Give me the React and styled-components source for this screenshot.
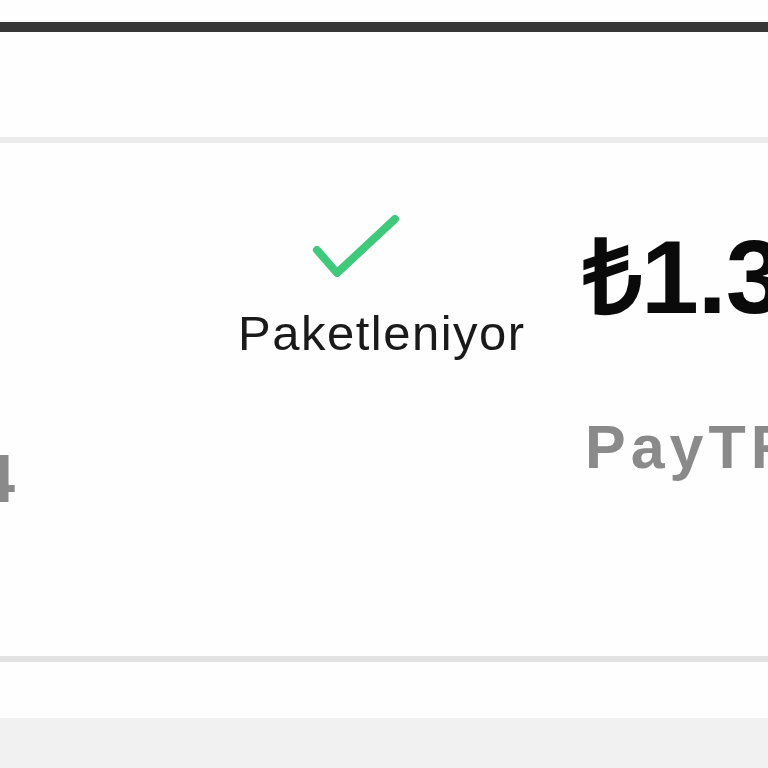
import React from "react";
import styled, { createGlobalStyle } from "styled-components";

const Global = createGlobalStyle`
  html, body { margin: 0; padding: 0; }
  body {
    width: 768px;
    height: 768px;
    overflow: hidden;
    background: #f1f1f1;
    font-family: "Liberation Sans", Arial, sans-serif;
  }
`;

const Page = styled.div`
  width: 768px;
  height: 768px;
  overflow: hidden;
  background: #f1f1f1;
`;

const Card = styled.section`
  background: #fefefe;
  padding-top: 22px;
`;

const DarkBar = styled.div`
  height: 10px;
  background: #373737;
`;

const HeaderSpace = styled.div`
  height: 105px;
`;

const Row = styled.div`
  display: grid;
  grid-template-columns: 15px 568px 1fr;
  height: 513px;
  border-top: 6px solid #ebebeb;
  border-bottom: 6px solid #e2e2e2;
  overflow: hidden;
`;

const FooterSpace = styled.div`
  height: 56px;
`;

const LeftCol = styled.div`
  display: flex;
  justify-content: flex-end;
  padding-top: 301px;
`;

const MetaText = styled.span`
  font-size: ${(p) => p.$size}px;
  font-weight: ${(p) => (p.$bold ? 700 : 400)};
  color: #8a8a8a;
  line-height: 1;
  white-space: nowrap;
  letter-spacing: ${(p) => p.$spacing || 0}px;
`;

const CenterCol = styled.div`
  display: flex;
  flex-direction: column;
  align-items: flex-start;
  padding-left: 223px;
  padding-top: 67px;
`;

const CheckIcon = styled.svg`
  display: block;
  margin-left: 71px;
`;

const StatusLabel = styled.span`
  margin-top: 27px;
  font-size: 49px;
  letter-spacing: 1.5px;
  line-height: 1;
  color: #1a1a1a;
  white-space: nowrap;
`;

const RightCol = styled.div`
  display: flex;
  flex-direction: column;
  align-items: flex-start;
  padding-top: 82px;
  min-width: 0;
`;

const Price = styled.span`
  font-size: 104px;
  font-weight: 700;
  line-height: 1;
  color: #0a0a0a;
  white-space: nowrap;
  letter-spacing: -1px;
`;

const PaymentWrap = styled.div`
  margin-top: 88px;
  padding-left: 2px;
`;

export default function App() {
  return (
    <Page>
      <Global />
      <Card>
        <DarkBar />
        <HeaderSpace />
        <Row>
          <LeftCol>
            <MetaText $size={68} $bold>12.05.2024</MetaText>
          </LeftCol>
          <CenterCol>
            <CheckIcon width="95" height="72" viewBox="0 0 95 72" aria-hidden="true">
              <polyline
                points="8,40 28,63 86,9"
                fill="none"
                stroke="#3ec97b"
                strokeWidth="8"
                strokeLinecap="round"
                strokeLinejoin="round"
              />
            </CheckIcon>
            <StatusLabel>Paketleniyor</StatusLabel>
          </CenterCol>
          <RightCol>
            <Price>₺1.349,90</Price>
            <PaymentWrap>
              <MetaText $size={61} $bold $spacing={5}>PayTR</MetaText>
            </PaymentWrap>
          </RightCol>
        </Row>
        <FooterSpace />
      </Card>
    </Page>
  );
}
